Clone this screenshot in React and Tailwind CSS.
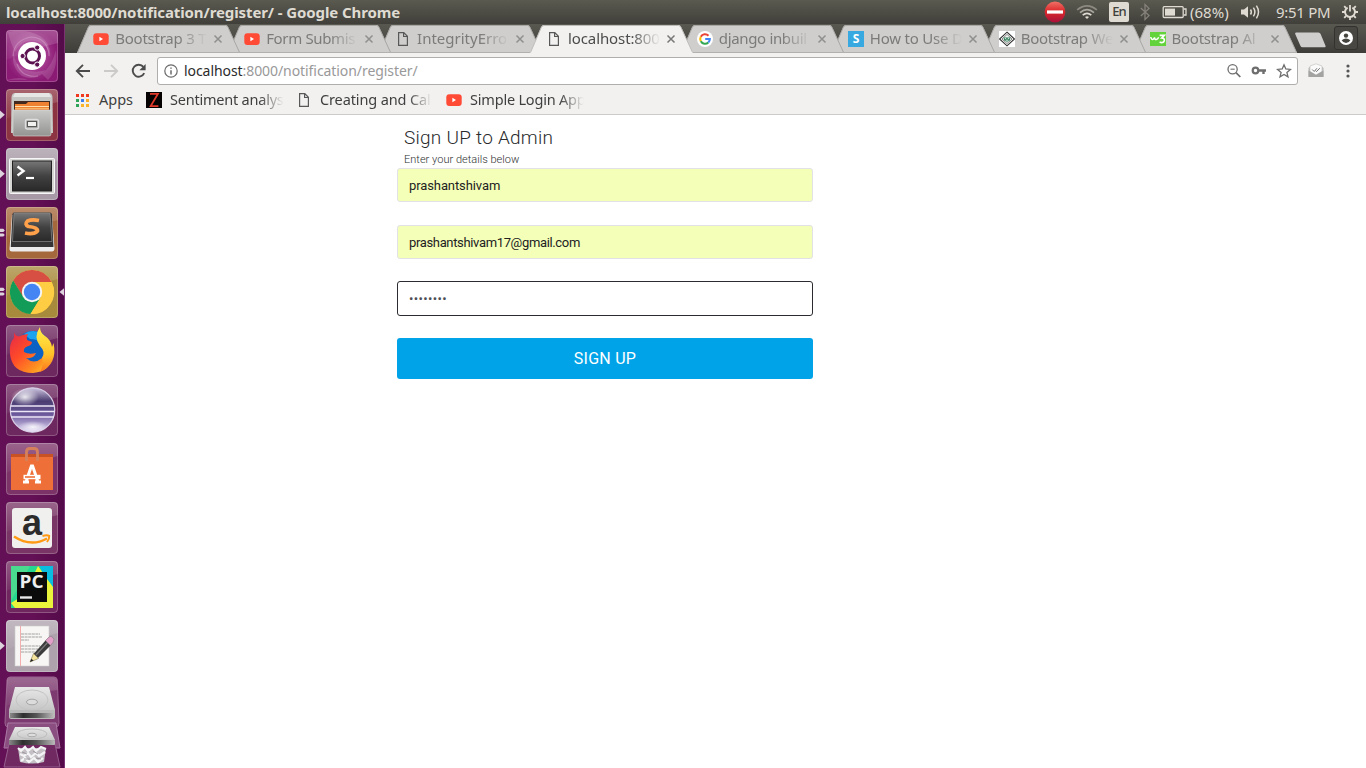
import React from "react";

const YouTube = () => (
  <svg width="16" height="16" viewBox="0 0 16 16" className="shrink-0">
    <rect x="0.3" y="2.3" width="15.4" height="11.6" rx="3" fill="#ff4a36" />
    <path d="M6.4 5.8 L10 8 L6.4 10.2Z" fill="#fff" />
  </svg>
);
const Doc = () => (
  <svg width="16" height="16" viewBox="0 0 16 16" className="shrink-0">
    <path d="M3.6 1.7 H8.8 L12.4 5.3 V14.3 H3.6Z M8.6 1.7 V5.5 H12.4" fill="none" stroke="#585858" strokeWidth="1.2" />
  </svg>
);
const Google = () => (
  <svg width="16" height="16" viewBox="0 0 16 16" className="shrink-0">
    <circle cx="8" cy="8" r="8" fill="#fff" />
    <g fill="none" strokeWidth="2.1">
      <path d="M11.5 4.7 A4.8 4.8 0 0 0 3.8 5.7" stroke="#ea4335" />
      <path d="M3.8 5.7 A4.8 4.8 0 0 0 3.8 10.3" stroke="#fbbc05" />
      <path d="M3.8 10.3 A4.8 4.8 0 0 0 11.3 11.5" stroke="#34a853" />
      <path d="M11.3 11.5 A4.8 4.8 0 0 0 12.8 8 H8.2" stroke="#4285f4" />
    </g>
  </svg>
);
const Scotch = () => (
  <svg width="16" height="16" viewBox="0 0 16 16" className="shrink-0">
    <rect width="16" height="16" fill="#38a9e0" />
    <text x="8" y="12.2" textAnchor="middle" fontSize="12" fontWeight="700" fill="#fff" fontFamily="Open Sans, sans-serif">S</text>
  </svg>
);
const Diamond = () => (
  <svg width="16" height="16" viewBox="0 0 16 16" className="shrink-0">
    <rect width="16" height="16" fill="#fff" />
    <path d="M8 1.2 L15.4 8 L8 14.8 L0.6 8Z" fill="#fff" stroke="#333" strokeWidth="1.1" />
    <path d="M8 3.4 L13 8 L8 12.6 L3 8Z" fill="#f2f5f3" stroke="#555" strokeWidth="0.7" />
    <path d="M4.6 6.6 H11.4 L10.8 9.4 L8 10.8 L5.2 9.4Z" fill="#2f7d58" />
    <path d="M5.8 7.6 H7.2 M8.8 7.6 H10.2 M6.6 9.2 H9.4" stroke="#fff" strokeWidth="0.8" />
  </svg>
);
const W3 = () => (
  <svg width="16" height="16" viewBox="0 0 16 16" className="shrink-0">
    <rect y="1" width="16" height="14" fill="#62d33b" />
    <path d="M0.8 6 Q1.3 9 3 8.4 Q4.4 8 4.5 6.4 Q4.8 9 6.4 8.4 Q8 8 8.6 6.2" fill="none" stroke="#fff" strokeWidth="1.5" />
    <path d="M9.6 4.4 H14.2 L11.8 7 Q14.8 7.2 14.2 9.8 Q13 12.6 9.6 11" fill="none" stroke="#fff" strokeWidth="1.7" />
  </svg>
);

const TABS = [
  { label: "Bootstrap 3 T", Icon: YouTube, cls: "z-[8]", track: "tracking-[-0.25px]" },
  { label: "Form Submis", Icon: YouTube, cls: "z-[7]", track: "tracking-[-0.35px]" },
  { label: "IntegrityErro", Icon: Doc, cls: "z-[6]", track: "tracking-[0px]" },
  { label: "localhost:800", Icon: Doc, cls: "z-[20]", track: "tracking-[-0.1px]", active: true },
  { label: "django inbuil", Icon: Google, cls: "z-[4]", track: "tracking-[-0.35px]" },
  { label: "How to Use D", Icon: Scotch, cls: "z-[3]", track: "tracking-[-0.2px]" },
  { label: "Bootstrap We", Icon: Diamond, cls: "z-[2]", track: "tracking-[-0.25px]" },
  { label: "Bootstrap Al", Icon: W3, cls: "z-[1]", track: "tracking-[-0.25px]" },
];

function Tab({ tab }) {
  const { Icon, active } = tab;
  return (
    <div className={`relative flex h-[29px] w-[150.9px] shrink-0 items-center pl-4 ${tab.cls}`}>
      <svg className="absolute left-0 top-0 overflow-visible" width="164" height="29" viewBox="0 0 164 29">
        <path
          d="M0 29 L11 3.4 Q12 1 14 1 H148.5 Q150.3 1 151.3 3.4 L163 29Z"
          fill={active ? "#f2f1f0" : "#cfcecd"}
        />
        <path d="M0.5 28.5 L11.3 3.4 Q12.3 1.5 14 1.5 H148.5 Q150 1.5 151 3.4 L162.6 28.5" fill="none" stroke={active ? "#bdbcb9" : "#a8a7a4"} strokeWidth="1" />
        {!active && <path d="M0 28.5 H163" stroke="#b2b1af" />}
      </svg>
      <div className="relative flex items-center pt-[1px]">
        <Icon />
        <span
          className={`-mt-[2px] ml-[6px] block w-[96px] overflow-hidden whitespace-nowrap text-[15px] leading-[22px] ${tab.track} [mask-image:linear-gradient(to_right,black_66%,transparent_96%)] ${active ? "text-[#4c4c4c]" : "text-[#7b7b7a]"}`}
        >
          {tab.label}
        </span>
        <svg width="10" height="10" viewBox="0 0 10 10" className="ml-[2px]">
          <path d="M1.5 1.5 L8.5 8.5 M8.5 1.5 L1.5 8.5" stroke={active ? "#777" : "#8f8f8e"} strokeWidth="1.5" />
        </svg>
      </div>
    </div>
  );
}

function SystemBar() {
  return (
    <header className="flex h-6 items-center justify-between bg-gradient-to-b from-[#5b5a50] to-[#403f3a] pl-[6px] pr-[7px] text-[#dfdbd2]">
      <h1 className="whitespace-nowrap text-[15px] font-bold leading-6 tracking-[-0.1px]">
        localhost:8000/notification/register/ - Google Chrome
      </h1>
      <div className="flex h-6 items-center">
        <svg width="22" height="22" viewBox="0 0 22 22">
          <defs>
            <linearGradient id="stop" x1="0" y1="0" x2="0" y2="1">
              <stop offset="0" stopColor="#f07066" />
              <stop offset="0.45" stopColor="#dc2a2c" />
              <stop offset="1" stopColor="#a91039" />
            </linearGradient>
          </defs>
          <circle cx="11" cy="11" r="10.4" fill="url(#stop)" />
          <rect x="3" y="9.4" width="16" height="3.2" fill="#fff" />
        </svg>
        <svg width="22" height="16" viewBox="0 0 22 16" className="ml-[10px]" fill="none" strokeWidth="1.7">
          <path d="M1.2 5.8 Q11 -2.2 20.8 5.8" stroke="#8d8a82" />
          <path d="M4 8.6 Q11 2.6 18 8.6" stroke="#aaa79f" />
          <path d="M6.7 11.2 Q11 7.6 15.3 11.2" stroke="#dfdbd2" />
          <path d="M9 13 Q11 11.3 13 13 L11 15Z" fill="#dfdbd2" stroke="none" />
        </svg>
        <span className="ml-[11px] flex h-5 w-5 items-center justify-center rounded-[2px] bg-[#dfdbd2] text-[13px] font-medium tracking-[-1px] text-[#403f3a]">
          En
        </span>
        <svg width="12" height="18" viewBox="0 0 12 18" className="ml-[10px]">
          <path d="M1.8 5 L10 12.6 L6 16.4 V1.6 L10 5.4 L1.8 13" fill="none" stroke="#85827b" strokeWidth="1.3" />
        </svg>
        <svg width="26" height="14" viewBox="0 0 26 14" className="ml-[11px]">
          <rect x="1.2" y="1.7" width="20" height="10.8" rx="1" fill="none" stroke="#dfdbd2" strokeWidth="1.3" />
          <rect x="3" y="3.6" width="10" height="7" fill="#dfdbd2" />
          <path d="M22 4 H24 V10 H22" fill="none" stroke="#dfdbd2" strokeWidth="1.3" />
        </svg>
        <span className="ml-[2px] w-[39px] whitespace-nowrap text-[15px] leading-6 tracking-[0px]">(68%)</span>
        <svg width="22" height="16" viewBox="0 0 22 16" className="ml-[11px]" fill="none" stroke="#dfdbd2" strokeWidth="1.5">
          <path d="M1 5.5 H4 L8 2.2 V13.8 L4 10.5 H1Z" fill="#dfdbd2" stroke="none" />
          <path d="M10.5 5.5 Q12.3 8 10.5 10.5 M13.4 3.6 Q16.4 8 13.4 12.4 M16.4 1.6 Q20.6 8 16.4 14.4" />
        </svg>
        <span className="ml-[14px] w-[54px] whitespace-nowrap text-[15px] leading-6 tracking-[-0.3px]">9:51 PM</span>
        <svg width="18" height="18" viewBox="0 0 18 18" className="ml-[11px]" fill="none" stroke="#dfdbd2">
          <path d="M6.6 4.6 A5 5 0 1 0 11.4 4.6" strokeWidth="2" />
          <path d="M9 2 V8.5" strokeWidth="1.8" />
          <path d="M3.2 3.2 L5 5 M14.8 3.2 L13 5 M1 9 H4 M14 9 H17 M3.2 14.8 L5 13 M14.8 14.8 L13 13 M9 14 V17" strokeWidth="1.8" />
        </svg>
      </div>
    </header>
  );
}

function Tile({ color, arrows = 0, focused, children }) {
  return (
    <div className="relative flex h-[52px] w-[65px] shrink-0 pl-[6px]">
      {arrows > 0 && (
        <svg className="absolute left-0 top-[19px]" width="5" height="14" viewBox="0 0 5 14" fill="#ddd3dc">
          {arrows === 1 ? <path d="M0 2.5 L4.8 6.7 L0 11Z" /> : <path d="M0 2.8 H3.3 L4.8 4.5 L3.3 6 H0Z M0 7.4 H3.3 L4.8 9 L3.3 10.6 H0Z" />}
        </svg>
      )}
      <svg width="52" height="52" viewBox="0 0 52 52">
        <rect width="52" height="52" rx="4" fill={color} />
        <path d="M4 0 H48 Q52 0 52 4 V13 Q26 19 0 30 V4 Q0 0 4 0Z" fill="url(#gloss)" />
        <rect x="0.5" y="0.5" width="51" height="51" rx="3.5" fill="none" stroke="#fff" strokeOpacity="0.22" />
        {children}
      </svg>
      {focused && (
        <svg className="absolute right-0 top-[20px]" width="6" height="12" viewBox="0 0 6 12">
          <path d="M6 1.5 L0.5 6 L6 10.5Z" fill="#ddd3dc" />
        </svg>
      )}
    </div>
  );
}

function Launcher() {
  return (
    <aside className="flex w-[65px] shrink-0 flex-col gap-[7px] overflow-hidden border-r border-[#7b3272] bg-gradient-to-r from-[#641056] via-[#641056] to-[#540b49] pt-[6px]">
      <svg width="0" height="0" className="absolute">
        <defs>
          <linearGradient id="gloss" x1="0" y1="0" x2="0" y2="1">
            <stop offset="0" stopColor="#fff" stopOpacity="0.24" />
            <stop offset="1" stopColor="#fff" stopOpacity="0.04" />
          </linearGradient>
          <radialGradient id="plum">
            <stop offset="0.3" stopColor="#b04a9c" />
            <stop offset="1" stopColor="#8b1a74" />
          </radialGradient>
          <linearGradient id="silver" x1="0" y1="0" x2="0" y2="1">
            <stop offset="0" stopColor="#c9c9c7" />
            <stop offset="1" stopColor="#949492" />
          </linearGradient>
          <linearGradient id="dark" x1="0" y1="0" x2="0" y2="1">
            <stop offset="0" stopColor="#777" />
            <stop offset="0.5" stopColor="#414141" />
            <stop offset="1" stopColor="#292929" />
          </linearGradient>
          <linearGradient id="disk" x1="0" y1="0" x2="0" y2="1">
            <stop offset="0" stopColor="#e8e8e8" />
            <stop offset="1" stopColor="#c6c6c6" />
          </linearGradient>
          <linearGradient id="edge" x1="0" y1="0" x2="1" y2="0">
            <stop offset="0" stopColor="#8a8a8a" />
            <stop offset="0.3" stopColor="#2d2d2d" />
            <stop offset="0.6" stopColor="#555" />
            <stop offset="1" stopColor="#bbb" />
          </linearGradient>
          <linearGradient id="fox" x1="0" y1="0" x2="1" y2="1">
            <stop offset="0" stopColor="#e4284a" />
            <stop offset="0.4" stopColor="#ff4b28" />
            <stop offset="0.75" stopColor="#ff9420" />
            <stop offset="1" stopColor="#ffd83a" />
          </linearGradient>
          <linearGradient id="tail" x1="0" y1="0" x2="0" y2="1">
            <stop offset="0" stopColor="#fff04a" />
            <stop offset="0.6" stopColor="#ffc229" />
            <stop offset="1" stopColor="#ff741f" />
          </linearGradient>
          <linearGradient id="orb" x1="0" y1="0" x2="0" y2="1">
            <stop offset="0" stopColor="#cfc6e0" />
            <stop offset="0.3" stopColor="#4a3c70" />
            <stop offset="0.6" stopColor="#6c589c" />
            <stop offset="1" stopColor="#e3daf6" />
          </linearGradient>
          <radialGradient id="shine">
            <stop offset="0" stopColor="#fff" stopOpacity="0.85" />
            <stop offset="1" stopColor="#fff" stopOpacity="0" />
          </radialGradient>
        </defs>
      </svg>

      <Tile color="url(#plum)">
        <g fill="#fff" fillOpacity="0.14">
          <path d="M2 2 Q20 -2 34 6 Q46 14 44 28 Q42 14 30 11 Q16 8 9 22 Q4 12 2 2Z" />
          <path d="M8 22 Q4 36 16 46 Q30 52 40 40 Q28 44 18 39 Q8 34 8 22Z" />
          <path d="M1 50 Q14 46 22 50Z M36 44 Q46 36 50 20 Q52 40 42 50Z" />
        </g>
        <path d="M7 26 Q8 10 25 7 Q42 8 43 26 M11 34 Q16 48 32 46" fill="none" stroke="#f3d0ec" strokeOpacity="0.3" strokeWidth="1.2" />
        <circle cx="26" cy="26" r="14" fill="#fff" />
        <circle cx="26.5" cy="26" r="7" fill="none" stroke="#5c1150" strokeWidth="3" />
        <g stroke="#fff" strokeWidth="1">
          <circle cx="16.6" cy="26" r="2.6" fill="#5c1150" />
          <circle cx="31.2" cy="17.6" r="2.6" fill="#5c1150" />
          <circle cx="31.2" cy="34.6" r="2.6" fill="#5c1150" />
        </g>
      </Tile>

      <Tile color="#8c3441" arrows={1}>
        <path d="M9 4 H43 Q46 4 46.5 8 L47 44 H5 L5.5 8 Q6 4 9 4Z" fill="#c6c6c4" />
        <path d="M9 4 H43 L45 8 H7Z" fill="#e6e6e4" />
        <rect x="8" y="12" width="36" height="9" fill="#432a20" />
        <path d="M9 15 H20 L22 13 H43 V21 H9Z" fill="#ef8132" />
        <path d="M9 17.5 H43" stroke="#ffe2ab" strokeWidth="1" />
        <path d="M9 19.5 H43" stroke="#f9b666" strokeWidth="1" />
        <path d="M7 21 H45 V45 Q45 47 43 47 H9 Q7 47 7 45Z" fill="url(#silver)" stroke="#dadad8" strokeWidth="0.6" />
        <rect x="19.5" y="30.5" width="13" height="9.5" rx="2" fill="#a6a6a4" stroke="#dedede" strokeWidth="1.4" />
        <rect x="21.5" y="32.5" width="9" height="5" fill="#f1f1ef" stroke="#585858" />
      </Tile>

      <Tile color="#a79aa6" arrows={1}>
        <rect x="3.5" y="10.5" width="45" height="35" rx="1" fill="#d6d6d4" stroke="#f6f6f6" />
        <rect x="6.5" y="13" width="39" height="30" fill="url(#dark)" stroke="#222" />
        <path d="M11.5 18.5 L17.5 23 L11.5 27.5" fill="none" stroke="#fff" strokeWidth="2.4" />
        <path d="M20 30 H28" stroke="#fff" strokeWidth="2.2" />
      </Tile>

      <Tile color="#a5673c" arrows={2}>
        <path d="M6 8 L46 8 L48.5 42 Q48 44.5 46 44.5 H6 Q3.5 44.5 3.5 42Z" fill="#ececec" />
        <path d="M8 5.5 H44 Q45.5 5.5 46 7.5 L47.5 40 H4.8 L6.4 7.5 Q6.7 5.5 8 5.5Z" fill="#353535" />
        <path d="M8 6 H44 L46 34.5 H6.5Z" fill="url(#dark)" stroke="#8a8a8a" strokeWidth="0.7" />
        <path d="M33 13.5 Q26 12 21.5 14 Q18 17.5 22.5 19.5 Q32 20.5 31.5 24 Q28 28 19 26" fill="none" stroke="#ffa04b" strokeWidth="3.7" />
      </Tile>

      <Tile color="#a88a3c" arrows={2} focused>
        <circle cx="26" cy="26" r="22" fill="#ffcd43" />
        <path d="M26 26 L26 16 H45.6 A22 22 0 0 0 7.2 14.5 L17 31Z" fill="#d64f42" />
        <path d="M7.2 14.5 A22 22 0 0 0 24.5 48 L35 31 L26 36 L17.3 31Z" fill="#139b58" />
        <path d="M24.5 48 A22 22 0 0 0 45.6 16 H26 L35 31Z" fill="#ffcd43" />
        <circle cx="26" cy="26" r="10.2" fill="#f5f5f3" />
        <circle cx="26" cy="26" r="8.2" fill="#4585f3" />
      </Tile>

      <Tile color="#6d285f">
        <circle cx="27" cy="23" r="17" fill="#0b62c4" />
        <path d="M18 9 Q26 3 37 9 L38 18 Q30 14 24 14Z" fill="#1aa3ee" />
        <path d="M8 7 Q9 11 13 11.5 Q17 9 22 9 Q20 12 21 15 L26 17 Q26 20 21 21.5 Q17 23 18 27 Q23 30 30 28 Q28 34 20 33 Q28 40 36 33 Q40 28 38 20 Q44 22 46 30 Q46 46 27 48 Q6 48 4 29 Q3 18 8 13Z" fill="url(#fox)" />
        <path d="M34 2 Q34 8 39 11 Q45 15 46 22 L47.5 18 Q52 39 34 47 Q38 40 36 33 Q40 27 34 21 Q27 12 34 2Z" fill="url(#tail)" />
      </Tile>

      <Tile color="#6d285f">
        <circle cx="26.5" cy="26" r="22.2" fill="url(#orb)" stroke="#d6cde5" strokeWidth="1.2" />
        <ellipse cx="19" cy="13" rx="14" ry="9" fill="url(#shine)" />
        <path d="M5 22 H48 M4.5 27.5 H48.5 M5 33 H48" stroke="#ece5f6" strokeWidth="1.5" />
        <ellipse cx="27" cy="43" rx="15" ry="6" fill="url(#shine)" />
      </Tile>

      <Tile color="#7b3368">
        <path d="M5 11 H47 V47 H5Z" fill="#ee7038" />
        <path d="M5 11 H47 V14 H5Z" fill="#c95224" />
        <path d="M20.5 18 V9 Q20.5 5.5 24 5.5 H28 Q31.5 5.5 31.5 9 V18" fill="none" stroke="#d5805c" strokeWidth="2.8" />
        <path d="M17 39 H23 M29 39 H35 M20 39 L25.4 23 H26.6 L32 39" fill="none" stroke="#fff" strokeWidth="3" />
        <path d="M17.5 34 H34.5" stroke="#fff" strokeWidth="4.4" />
        <path d="M19 34 H29" stroke="#ee7038" strokeWidth="1.6" />
      </Tile>

      <Tile color="#793565">
        <rect x="6" y="6" width="40" height="40" rx="3" fill="#f0f0ef" />
        <text x="26" y="33" textAnchor="middle" fontSize="36" fontWeight="700" fill="#2b2b2b" fontFamily="Liberation Sans, sans-serif">a</text>
        <path d="M8 34.5 Q25 45.5 41 36.5" fill="none" stroke="#ff9a15" strokeWidth="2.5" />
        <path d="M36.5 34 Q41 32.7 43.2 33.9 Q43.6 36.7 41 40" fill="none" stroke="#ff9a15" strokeWidth="2" />
      </Tile>

      <Tile color="#70275f">
        <rect x="5" y="5" width="42" height="42" fill="#25d790" />
        <path d="M5 5 H24 L5 40Z" fill="#49d98f" />
        <path d="M34 5 H47 V29 L38 20Z" fill="#09bde0" />
        <path d="M9 47 L5 42 L18 34 L32 5 L47 26 V47Z" fill="#eaf43a" />
        <path d="M34 5 H47 V25 L38 14Z" fill="#09bde0" />
        <rect x="11" y="11" width="30" height="30" fill="#0b0b0b" />
        <text x="13.5" y="26.5" fontSize="17" fontWeight="700" fill="#eee" fontFamily="Open Sans, sans-serif" textLength="24" lengthAdjust="spacingAndGlyphs">PC</text>
        <path d="M14 36.5 H26" stroke="#e9e9e9" strokeWidth="2.4" />
      </Tile>

      <Tile color="#aea2ad" arrows={1}>
        <rect x="9" y="6" width="34" height="40" fill="#f7f6f4" stroke="#ccc" strokeWidth="0.6" />
        <path d="M14.5 6 V46" stroke="#ef9c9b" strokeWidth="0.8" />
        <path d="M15 14 H34 M15 17 H36 M15 20 H23 M15 26 H34 M15 29 H32 M15 32 H29" stroke="#a1a1a1" strokeWidth="1.1" strokeDasharray="3 .6" />
        <path d="M27.5 34 L40 20 L45 25 L32 38Z" fill="#3b3b3b" />
        <path d="M30 35 L42.5 21.5" stroke="#777" strokeWidth="1.2" />
        <path d="M24 42 L27.5 33.5 L32.5 38.5Z" fill="#f4e39a" stroke="#6b6340" strokeWidth="0.5" />
        <path d="M24 42 L25.4 38.7 L27.5 40.6Z" fill="#222" />
        <path d="M39.5 20.5 L43 17 Q46 15 48 19.5 Q48 22 44.5 25.5Z" fill="#e2a0c9" stroke="#8e7c8a" strokeWidth="0.7" />
      </Tile>

      <svg width="64" height="97" viewBox="0 0 64 97" className="-mt-[7px] shrink-0">
        <path d="M10 5 H54 Q57 5 57.3 8 L59 51 Q59 55 56 55 H8 Q5 55 5 51 L7 8 Q7.3 5 10 5Z" fill="#7d3a70" stroke="#9a6390" />
        <path d="M10 5.5 H54 Q57 6 57 9 L57.4 18 Q32 20 6.6 34 L7 9 Q7 6 10 5.5Z" fill="url(#gloss)" />
        <path d="M8 51 H56 L60 76 H4Z" fill="#8b4e80" stroke="#aa78a3" />
        <path d="M9 72 H55 L60 95 H4Z" fill="#712961" stroke="#955e8c" />
        <path d="M15 15 H49 L55 38 H9Z" fill="url(#disk)" />
        <path d="M9 38 H55 V45 Q55 47 53 47 H11 Q9 47 9 45Z" fill="#b9b9b9" />
        <rect x="10" y="41" width="44" height="5" fill="url(#edge)" />
        <ellipse cx="32" cy="28" rx="16" ry="10" fill="none" stroke="#c4c4c4" />
        <ellipse cx="32" cy="30" rx="5.5" ry="2.8" fill="#dcdcdc" stroke="#a6a6a6" />
        <path d="M15 55 H49 L55 68 H9Z" fill="url(#disk)" />
        <rect x="9" y="68" width="46" height="5" rx="1" fill="url(#edge)" />
        <ellipse cx="32" cy="62" rx="15" ry="5" fill="none" stroke="#bdbdbd" />
        <ellipse cx="32" cy="63" rx="4.5" ry="1.8" fill="#ddd" stroke="#aaa" />
        <path d="M18 76 L46 76 L44 90 Q32 93 20 90Z" fill="#c4c0c5" />
        <path d="M18 76 L21 79 L25 75 L28 79 L33 75 L36 79 L41 75 L46 77 M20 82 L24 84 L28 81 L31 85 L36 81 L39 84 L45 80 M21 89 L25 86 L29 90 L34 86 L38 90 L43 86" fill="none" stroke="#f4f3f5" strokeWidth="2.2" />
        <path d="M22 80 L27 82 M33 79 L38 82 M24 87 L30 87 M36 86 L41 87" stroke="#8f8a90" strokeWidth="0.8" />
      </svg>
    </aside>
  );
}

function TabStrip() {
  return (
    <div className="flex h-[29px] items-start bg-gradient-to-b from-[#595850] to-[#3e3d39] pl-[12.3px]">
      {TABS.map((t) => (
        <Tab key={t.label} tab={t} />
      ))}
      <svg width="34" height="29" viewBox="0 0 34 29" className="ml-[9px] shrink-0">
        <path d="M3 8.5 H25.5 Q27 8.5 27.6 10 L32.6 22 Q32.8 23.2 31.8 23.2 H9.5 Q8 23.2 7.5 22 L2.2 10 Q1.8 8.5 3 8.5Z" fill="#cfcecd" />
      </svg>
      <div className="ml-[7px] mt-[2px] flex h-6 w-6 shrink-0 items-center justify-center rounded-[3px] border border-[#33322e] bg-[#484741]">
        <svg width="14" height="14" viewBox="0 0 14 14">
          <circle cx="7" cy="7" r="7" fill="#fff" />
          <circle cx="7" cy="4.6" r="2.2" fill="#45443f" />
          <path d="M2.6 9.2 Q7 5.8 11.4 9.2 Q9.8 11.9 7 11.9 Q4.2 11.9 2.6 9.2Z" fill="#45443f" />
        </svg>
      </div>
    </div>
  );
}

function Toolbar() {
  return (
    <div className="flex h-[36px] items-center pl-[10px]">
      <svg width="16" height="16" viewBox="0 0 16 16" fill="none" stroke="#4b4b4b" strokeWidth="1.9">
        <path d="M15 8 H2 M8 1.8 L1.8 8 L8 14.2" />
      </svg>
      <svg width="16" height="16" viewBox="0 0 16 16" fill="none" stroke="#cbcac9" strokeWidth="1.9" className="ml-3">
        <path d="M1 8 H14 M8 1.8 L14.2 8 L8 14.2" />
      </svg>
      <svg width="16" height="16" viewBox="0 0 16 16" className="ml-3">
        <path d="M13.2 10.2 A6 6 0 1 1 12.4 3.9" fill="none" stroke="#4b4b4b" strokeWidth="1.9" />
        <path d="M14.6 1 V7.2 H8.4Z" fill="#4b4b4b" />
      </svg>
      <div className="ml-[10px] flex h-[28px] w-[1141px] items-center rounded-[3px] border border-[#afaeac] bg-white pl-[6px] pr-[5px]">
        <svg width="14" height="14" viewBox="0 0 14 14">
          <circle cx="7" cy="7" r="6.2" fill="none" stroke="#6b6b6b" strokeWidth="1.2" />
          <path d="M7 6.2 V10.4 M7 3.4 V4.8" stroke="#6b6b6b" strokeWidth="1.5" />
        </svg>
        <span className="ml-[6px] flex-1 whitespace-nowrap text-[14px] leading-[26px] tracking-[-0.07px] text-[#999]">
          <span className="text-[#2b2b2b]">localhost</span>:8000/notification/register/
        </span>
        <svg width="16" height="16" viewBox="0 0 16 16" fill="none" stroke="#6e6e6e">
          <circle cx="6.6" cy="6.2" r="4.6" strokeWidth="1.3" />
          <path d="M10 9.6 L14.3 14" strokeWidth="1.7" />
          <path d="M4.5 6.2 H8.7" strokeWidth="1.1" />
        </svg>
        <svg width="16" height="16" viewBox="0 0 16 16" className="ml-[9px]" fill="none" stroke="#6e6e6e">
          <circle cx="4.5" cy="7.5" r="2.8" strokeWidth="2.2" />
          <path d="M7 7.5 H15 M12.5 7.5 V11" strokeWidth="2.4" />
        </svg>
        <svg width="16" height="16" viewBox="0 0 16 16" className="ml-[9px]">
          <path d="M8 1.8 L9.8 6 L14.4 6.4 L10.9 9.4 L12 13.9 L8 11.5 L4 13.9 L5.1 9.4 L1.6 6.4 L6.2 6Z" fill="none" stroke="#6e6e6e" strokeWidth="1.3" />
        </svg>
      </div>
      <svg width="16" height="16" viewBox="0 0 16 16" className="ml-[10px]">
        <path d="M0.5 5 L3 3 H13 L15.5 5 V14 H0.5Z" fill="#b8b8b7" />
        <path d="M2 3 L8 0.8 L14 3 V8.5 L8 12 L2 8.5Z" fill="#fafafa" stroke="#c4c4c3" strokeWidth="0.7" />
        <path d="M0.5 7.5 L8 12 L15.5 7.5 V14 H0.5Z" fill="#a3a3a2" />
        <path d="M4.2 6.5 L6.2 8.5 L9 5.2 M7.5 7.6 L8.5 8.6 L11.8 5.2" fill="none" stroke="#777" />
      </svg>
      <svg width="4" height="14" viewBox="0 0 4 14" className="ml-[22px]" fill="#555">
        <circle cx="2" cy="2" r="1.6" />
        <circle cx="2" cy="7" r="1.6" />
        <circle cx="2" cy="12" r="1.6" />
      </svg>
    </div>
  );
}

const FADE = "[mask-image:linear-gradient(to_right,black_78%,transparent_99%)]";

function Bookmarks() {
  const colors = ["#f0381e", "#f0381e", "#f0381e", "#2ea45a", "#3b7ff0", "#fbae2a", "#2ea45a", "#fbb42a", "#fbb42a"];
  return (
    <div className="flex h-[26px] items-center border-b border-[#cccbc9] pb-[3px] pl-[11px] text-[14.5px] leading-[22px] text-[#3f3f3f]">
      <svg width="13" height="13" viewBox="0 0 13 13">
        {colors.map((c, i) => (
          <rect key={i} x={(i % 3) * 5} y={Math.floor(i / 3) * 5} width="3" height="3" fill={c} />
        ))}
      </svg>
      <span className="-mt-[2px] ml-[10px] w-[35px] whitespace-nowrap">Apps</span>
      <svg width="16" height="16" viewBox="0 0 16 16" className="ml-[12px]">
        <rect width="16" height="16" fill="#060202" />
        <path d="M4 1.8 H12 L4.6 14.2 H12.4" fill="none" stroke="#df3a2c" strokeWidth="1.7" />
      </svg>
      <span className={`-mt-[2px] ml-[8px] w-[115px] overflow-hidden whitespace-nowrap tracking-[-0.22px] ${FADE}`}>Sentiment analys</span>
      <span className="ml-[11px] flex"><Doc /></span>
      <span className={`-mt-[2px] ml-[8px] w-[113px] overflow-hidden whitespace-nowrap tracking-[-0.12px] ${FADE}`}>Creating and Cal</span>
      <span className="ml-[13px] flex"><YouTube /></span>
      <span className={`-mt-[2px] ml-[8px] w-[115px] overflow-hidden whitespace-nowrap tracking-[-0.2px] ${FADE}`}>Simple Login App</span>
    </div>
  );
}

function SignUpPage() {
  return (
    <main className="flex-1 bg-white pl-[332px] pt-[11px] font-['Roboto',sans-serif]">
      <form className="flex w-[416px] flex-col" onSubmit={(e) => e.preventDefault()}>
        <h2 className="pl-[7px] text-[19px] font-light leading-[23px] tracking-[0.25px] text-[#292b2c]">Sign UP to Admin</h2>
        <p className="pl-[7px] pt-[3px] text-[11px] font-light leading-[16px] tracking-[0.02px] text-[#2d2f30]">Enter your details below</p>
        <input
          type="text"
          defaultValue="prashantshivam"
          className="h-[34px] rounded-[3px] border border-[#e1e1e6] bg-[#f4ffb8] px-[11px] text-[13px] tracking-[-0.1px] text-[#222] outline-none"
        />
        <input
          type="text"
          defaultValue="prashantshivam17@gmail.com"
          className="mt-[23px] h-[34px] rounded-[3px] border border-[#e1e1e6] bg-[#f4ffb8] px-[11px] text-[13px] tracking-[-0.35px] text-[#222] outline-none"
        />
        <div className="mt-[22px] flex h-[35px] items-center rounded-[3px] border border-[#2b2c31] bg-white px-[11px] text-[13px] tracking-[0.35px] text-[#4d4d55]">
          ••••••••
        </div>
        <button type="submit" className="mt-[22px] h-[41px] rounded-[3px] bg-[#00a3e8] text-[16px] tracking-[0.25px] text-white">
          SIGN UP
        </button>
      </form>
    </main>
  );
}

export default function App() {
  return (
    <div className="flex h-[768px] w-[1366px] flex-col overflow-hidden font-['Noto_Sans','Open_Sans',sans-serif]">
      <SystemBar />
      <div className="flex min-h-0 flex-1">
        <Launcher />
        <div className="flex min-w-0 flex-1 flex-col bg-[#f2f1f0]">
          <TabStrip />
          <Toolbar />
          <Bookmarks />
          <SignUpPage />
        </div>
      </div>
    </div>
  );
}
